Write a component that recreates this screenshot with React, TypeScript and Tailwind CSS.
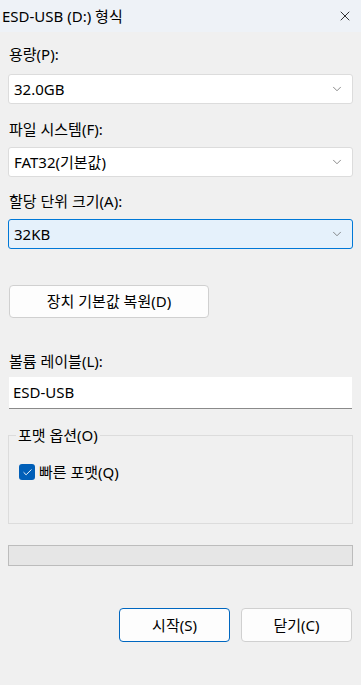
import { Check, ChevronDown, X } from "lucide-react";

const font = { fontFamily: '"Segoe UI", "Noto Sans", "Noto Sans CJK KR", sans-serif' };

const Combo = ({ value, focused }: { value: string; focused?: boolean }) => (
  <div
    className={
      "mx-2 flex h-[30px] items-center justify-between rounded-[3px] border pl-[5px] pr-[8px] text-[15px] text-black " +
      (focused ? "border-[#0078d7] bg-[#e5f1fb]" : "border-[#dcdcdc] bg-white")
    }
  >
    <span>{value}</span>
    <ChevronDown size={14} strokeWidth={1.2} className="text-[#5a5a5a]" />
  </div>
);

const Label = ({ children }: { children: string }) => (
  <div className="mx-[9px] text-[15px] leading-[20px] text-black">{children}</div>
);

export default function App() {
  return (
    <div className="h-[685px] w-[361px] overflow-hidden bg-[#f0f0f0]" style={font}>
      <div className="flex h-[32px] items-center justify-between bg-[#eef2f7] pl-[2px] pr-[8px]">
        <span className="text-[15px] text-black">ESD-USB (D:) 형식</span>
        <X size={16} strokeWidth={1.2} className="text-black" />
      </div>

      <div className="mt-[12px]">
        <Label>용량(P):</Label>
        <div className="mt-[10px]">
          <Combo value="32.0GB" />
        </div>
      </div>

      <div className="mt-[15px]">
        <Label>파일 시스템(F):</Label>
        <div className="mt-[8px]">
          <Combo value="FAT32(기본값)" />
        </div>
      </div>

      <div className="mt-[14px]">
        <Label>할당 단위 크기(A):</Label>
        <div className="mt-[8px]">
          <Combo value="32KB" focused />
        </div>
      </div>

      <button className="ml-[9px] mt-[36px] flex h-[33px] w-[200px] items-center justify-center rounded-[4px] border border-[#d0d0d0] bg-[#fdfdfd] text-[15px] text-black">
        장치 기본값 복원(D)
      </button>

      <div className="mt-[33px]">
        <Label>볼륨 레이블(L):</Label>
        <div className="mx-[9px] mt-[6px] flex h-[32px] items-center border-b border-[#8a8a8a] bg-white pl-[4px] text-[15px] text-black">
          ESD-USB
        </div>
      </div>

      <div className="relative mx-2 mt-[26px] h-[89px] border border-[#dcdcdc]">
        <span className="absolute left-[7px] top-[-10px] bg-[#f0f0f0] px-[2px] text-[15px] leading-[18px] text-black">
          포맷 옵션(O)
        </span>
        <div className="ml-[10px] mt-[25px] flex items-center gap-[4px]">
          <div className="flex h-[16px] w-[16px] items-center justify-center rounded-[3px] bg-[#005fb8]">
            <Check size={11} strokeWidth={2} className="text-white" />
          </div>
          <span className="text-[15px] text-black">빠른 포맷(Q)</span>
        </div>
      </div>

      <div className="mx-2 mt-[21px] h-[21px] border border-[#bcbcbc] bg-[#e6e6e6]" />

      <div className="mr-[9px] mt-[42px] flex justify-end gap-[11px]">
        <button className="flex h-[34px] w-[111px] items-center justify-center rounded-[4px] border border-[#0067c0] bg-[#fdfdfd] text-[15px] text-black">
          시작(S)
        </button>
        <button className="flex h-[34px] w-[111px] items-center justify-center rounded-[4px] border border-[#d0d0d0] bg-[#fdfdfd] text-[15px] text-black">
          닫기(C)
        </button>
      </div>
    </div>
  );
}
